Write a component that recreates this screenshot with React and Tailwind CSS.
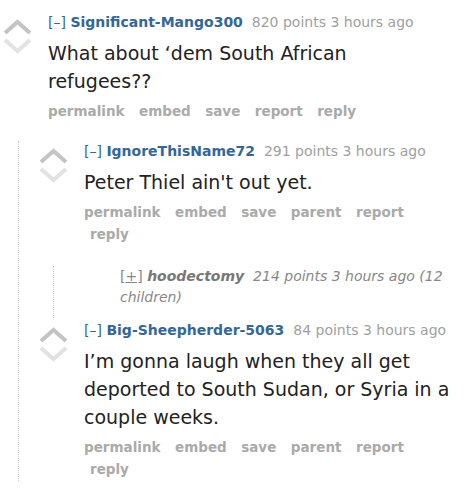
import React from "react";

function Arrows() {
  return (
    <svg width="30" height="36" viewBox="0 0 30 36" className="block">
      <polyline points="2,14 14.5,3 27,14" fill="none" stroke="#c4c4c4" strokeWidth="4" />
      <polyline points="2,21 14.5,32 27,21" fill="none" stroke="#e2e2e2" strokeWidth="4" />
    </svg>
  );
}

function Buttons({ items }) {
  return (
    <ul className="flex flex-wrap text-[13.5px] font-bold text-[#aaaaaa] leading-[22.5px]">
      {items.map((it, i) => (
        <li key={it} className={i === 0 ? "pr-[8.5px]" : "pl-[6px] pr-[8.5px]"}>
          {it}
        </li>
      ))}
    </ul>
  );
}

function Comment({ user, points, lines, buttons }) {
  return (
    <div className="flex">
      <div className="w-[45px] shrink-0 pt-[7px]">
        <Arrows />
      </div>
      <div className="flex-1 min-w-0">
        <div className="text-[14px] leading-[20px] whitespace-nowrap">
          <span className="text-[#336699]">[–]</span>{" "}
          <span className="text-[#336699] font-bold">{user}</span>
          <span className="text-[#a0a0a0]">&nbsp;&nbsp;{points}</span>
        </div>
        <div className="max-w-[380px] text-[19px] leading-[28px] text-[#222] mt-[7px]">{lines}</div>
        <div className="mt-[5px]">
          <Buttons items={buttons} />
        </div>
      </div>
    </div>
  );
}

export default function App() {
  return (
    <div className="w-[471px] h-[488px] overflow-hidden bg-white pl-[3px] pr-[10px] pt-[12px]" style={{ fontFamily: '"DejaVu Sans", sans-serif' }}>
      <Comment
        user="Significant-Mango300"
        points="820 points 3 hours ago"
        lines="What about ‘dem South African refugees??"
        buttons={["permalink", "embed", "save", "report", "reply"]}
      />
      <div className="ml-[15px] mt-[18px] border-l border-dotted border-[#cfcfcf] pl-[20px]">
        <Comment
          user="IgnoreThisName72"
          points="291 points 3 hours ago"
          lines="Peter Thiel ain't out yet."
          buttons={["permalink", "embed", "save", "parent", "report", "reply"]}
        />
        <div className="ml-[14px] mt-[20px] border-l border-dotted border-[#cfcfcf] pl-[66px] pb-[10px]">
          <p className="text-[14px] leading-[21px] italic text-[#888]">
            <span className="not-italic">[<span className="underline">+</span>]</span>{" "}
            <span className="font-bold text-[#777]">hoodectomy</span>&nbsp;&nbsp;214 points 3 hours ago (12 children)
          </p>
        </div>
        <div className="mt-[2px]">
          <Comment
            user="Big-Sheepherder-5063"
            points="84 points 3 hours ago"
            lines="I’m gonna laugh when they all get deported to South Sudan, or Syria in a couple weeks."
            buttons={["permalink", "embed", "save", "parent", "report", "reply"]}
          />
        </div>
      </div>
    </div>
  );
}
